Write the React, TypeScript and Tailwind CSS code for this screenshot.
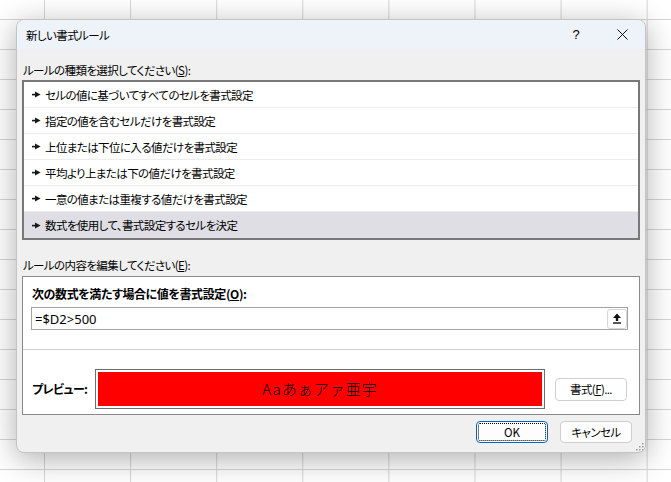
import React from 'react';

const rules = [
  'セルの値に基づいてすべてのセルを書式設定',
  '指定の値を含むセルだけを書式設定',
  '上位または下位に入る値だけを書式設定',
  '平均より上または下の値だけを書式設定',
  '一意の値または重複する値だけを書式設定',
  '数式を使用して、書式設定するセルを決定',
];

const Bullet = () => (
  <svg width="9" height="7" viewBox="0 0 9 7" className="shrink-0">
    <rect x="0" y="2.8" width="4" height="1.6" fill="#1a1a1a" />
    <path d="M3 0.6 L8.6 3.6 L3 6.6 Z" fill="#1a1a1a" />
  </svg>
);

const UploadIcon = () => (
  <svg width="10" height="11" viewBox="0 0 10 11">
    <path d="M5 0.5 L9 5 L6.2 5 L6.2 8 L3.8 8 L3.8 5 L1 5 Z" fill="#111" />
    <rect x="1" y="9.3" width="8" height="1.4" fill="#111" />
  </svg>
);

const Grip = () => (
  <svg width="9" height="9" viewBox="0 0 9 9">
    <rect x="7" y="1" width="1.5" height="1.5" fill="#9a9a9a" />
    <rect x="4" y="4" width="1.5" height="1.5" fill="#9a9a9a" />
    <rect x="7" y="4" width="1.5" height="1.5" fill="#9a9a9a" />
    <rect x="1" y="7" width="1.5" height="1.5" fill="#9a9a9a" />
    <rect x="4" y="7" width="1.5" height="1.5" fill="#9a9a9a" />
    <rect x="7" y="7" width="1.5" height="1.5" fill="#9a9a9a" />
  </svg>
);

export default function App() {
  return (
    <div className="w-[671px] h-[482px] overflow-hidden bg-white pl-[16px] pt-[19px] [background-image:linear-gradient(to_right,#d6d6d6_1px,transparent_1px),linear-gradient(to_bottom,#d6d6d6_1px,transparent_1px)] [background-size:86.1px_30px] [background-position:44px_19px] font-['Noto_Sans_CJK_JP',sans-serif] [font-feature-settings:'palt'] text-[11.5px] tracking-[-0.6px] text-black">
      <div className="relative w-[630px] h-[434px] rounded-[8px] border border-[#c4c4c4] bg-[#f0f0f0] shadow-[0_6px_30px_rgba(0,0,0,0.32)] overflow-hidden flex flex-col">
        {/* title bar */}
        <div className="h-[29px] shrink-0 bg-[#eef2f9] flex items-center">
          <span className="pl-[9px] flex-1 leading-[16px]">新しい書式ルール</span>
          <span className="w-[46px] text-center text-[13px] tracking-normal font-['Liberation_Sans',sans-serif]">?</span>
          <span className="w-[46px] flex justify-center">
            <svg width="11" height="11" viewBox="0 0 11 11">
              <path d="M0.5 0.5 L10.5 10.5 M10.5 0.5 L0.5 10.5" stroke="#111" strokeWidth="1" />
            </svg>
          </span>
        </div>

        <div className="px-[5px] flex flex-col">
          <div className="pt-[13px] pl-[1px] h-[29px] leading-[16px]">
            ルールの種類を選択してください(<span className="underline">S</span>):
          </div>
          <div className="mt-[2px] h-[160px] border-2 border-[#787878] bg-white flex flex-col">
            {rules.map((r, i) => (
              <div
                key={r}
                className={
                  i === rules.length - 1
                    ? 'h-[26px] flex items-center gap-[4px] pl-[8px] bg-[#dedee4]'
                    : 'h-[26px] flex items-center gap-[4px] pl-[8px] border-b border-[#ededed]'
                }
              >
                <Bullet />
                <span className="leading-[16px]">{r}</span>
              </div>
            ))}
          </div>

          <div className="mt-[17px] pl-[1px] h-[16px] leading-[16px]">
            ルールの内容を編集してください(<span className="underline">E</span>):
          </div>
          <div className="mt-[3px] h-[139px] border border-[#8a8a8a] bg-white flex flex-col">
            <div className="pt-[9px] pl-[9px] h-[25px] leading-[16px] font-bold text-[12px] tracking-[-0.4px]">
              次の数式を満たす場合に値を書式設定(<span className="underline">O</span>):
            </div>
            <div className="mt-[5px] ml-[8px] mr-[11px] h-[23px] border border-[#a3a3a3] flex items-center">
              <span className="flex-1 pl-[3px] text-[13px] tracking-normal font-['Noto_Sans',sans-serif] leading-[16px]">=$D2&gt;500</span>
              <span className="w-[20px] h-[20px] rounded-[3px] border border-[#d6d6d6] bg-white flex items-center justify-center">
                <UploadIcon />
              </span>
            </div>
            <div className="mt-[19px] h-px bg-[#cfcfcf]" />
            <div className="mt-[19px] flex items-center pl-[9px]">
              <span className="w-[63px] font-bold text-[12px] tracking-[-0.6px] leading-[16px]">プレビュー:</span>
              <div className="w-[450px] h-[40px] border border-[#6e6e6e] p-[2px] bg-white">
                <div className="h-full bg-[#ff0000] flex items-center justify-center text-[15px] font-light tracking-[1px] [font-feature-settings:normal] leading-[16px]">
                  Aaあぁアァ亜宇
                </div>
              </div>
              <button className="ml-[10px] w-[72px] h-[23px] rounded-[4px] border border-[#cfcfcf] bg-white leading-[16px]">
                書式(<span className="underline">F</span>)...
              </button>
            </div>
          </div>

          <div className="mt-[6px] flex justify-end gap-[12px] pr-[8px]">
            <button className="w-[72px] h-[22px] rounded-[4px] border border-[#0067c0] bg-[#fdfdfd] [outline:1px_dotted_#000] [outline-offset:-3px] leading-[16px] tracking-normal">
              OK
            </button>
            <button className="w-[72px] h-[22px] rounded-[4px] border border-[#cfcfcf] bg-[#fdfdfd] leading-[16px]">
              キャンセル
            </button>
          </div>
        </div>

        <div className="absolute right-[1px] bottom-[1px]">
          <Grip />
        </div>
      </div>
    </div>
  );
}
